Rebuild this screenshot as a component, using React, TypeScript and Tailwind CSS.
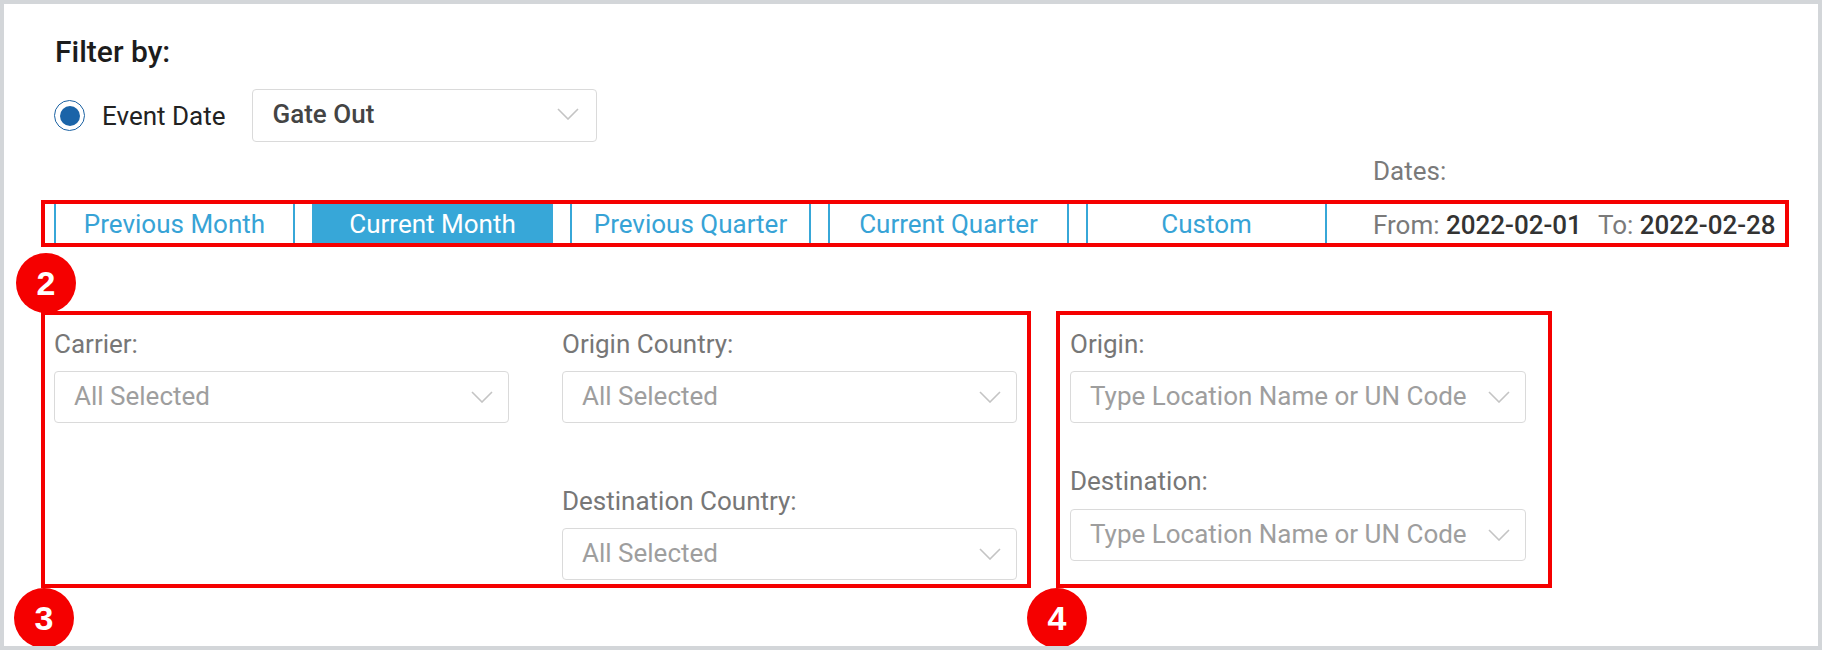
import React from "react";

function Chevron() {
  return (
    <svg width="22" height="12" viewBox="0 0 22 12" fill="none" className="text-[#c4c4c4] shrink-0">
      <polyline points="1,1 11,11 21,1" stroke="currentColor" strokeWidth="1.6" />
    </svg>
  );
}

function SelectBox({ text, width }: { text: string; width: string }) {
  return (
    <div className={`${width} h-[52px] border border-[#dadada] rounded-[4px] bg-white flex items-center justify-between pl-[19px] pr-[15px]`}>
      <span className="text-[#9e9e9e] whitespace-nowrap mb-[3px]">{text}</span>
      <Chevron />
    </div>
  );
}

function Field({ label, text, className = "" }: { label: string; text: string; className?: string }) {
  return (
    <div className={`flex flex-col ${className}`}>
      <div className="h-[30px] text-[#777777]">{label}</div>
      <div className="mt-[12px]">
        <SelectBox text={text} width="w-[455px]" />
      </div>
    </div>
  );
}

function Badge({ n, pos }: { n: string; pos: string }) {
  return (
    <div
      className={`absolute ${pos} w-[60px] h-[60px] rounded-full bg-[#f50000] flex items-center justify-center text-white font-bold text-[34px] font-['Liberation_Sans',sans-serif]`}
    >
      {n}
    </div>
  );
}

const tabs = ["Previous Month", "Current Month", "Previous Quarter", "Current Quarter", "Custom"];

export default function App() {
  return (
    <div className="w-[1822px] h-[650px] bg-white border-4 border-[#d3d6d9] relative overflow-hidden font-['Roboto',sans-serif] text-[26px] leading-[30px]">
      <div className="flex flex-col pt-[33px]">
        <div className="pl-[51px] h-[30px] font-medium text-[30px] text-[#1c1c1c]">Filter by:</div>

        <div className="pl-[50px] mt-[22px] h-[53px] flex items-center">
          <div className="w-[31px] h-[31px] rounded-full border-[1.5px] border-[#1b62a3] flex items-center justify-center">
            <div className="w-[20px] h-[20px] rounded-full bg-[#1a64a8]" />
          </div>
          <span className="ml-[17px] text-[#222222]">Event Date</span>
          <div className="ml-[27px] w-[345px] h-[53px] border border-[#dadada] rounded-[4px] flex items-center justify-between pl-[19px] pr-[17px] pb-[4px]">
            <span className="font-medium text-[#444444]">Gate Out</span>
            <Chevron />
          </div>
        </div>

        <div className="mt-[14px] pl-[1369px] h-[30px] text-[#7a7a7a]">Dates:</div>

        <div className="mt-[14px] ml-[37px] w-[1748px] h-[47px] border-4 border-[#f50000] flex items-stretch pl-[9px]">
          <div className="flex gap-[17px]">
            {tabs.map((t, i) => (
              <div
                key={t}
                className={
                  i === 1
                    ? "w-[241px] flex items-center justify-center bg-[#37a7d8] text-white"
                    : "w-[241px] flex items-center justify-center border-x-2 border-[#37a7d8] text-[#37a3d6]"
                }
              >
                {t}
              </div>
            ))}
          </div>
          <div className="ml-[46px] flex items-center whitespace-nowrap pt-[2px]">
            <span className="text-[#7a7a7a]">From:&nbsp;</span>
            <span className="font-medium text-[#333333]">2022-02-01</span>
            <span className="text-[#7a7a7a] ml-[16px]">To:&nbsp;</span>
            <span className="font-medium text-[#333333]">2022-02-28</span>
          </div>
        </div>

        <div className="mt-[64px] ml-[37px] flex items-stretch gap-[25px]">
          <div className="w-[990px] border-4 border-[#f50000] pl-[9px] pr-[10px] pt-[14px] pb-[4px] grid grid-cols-[455px_455px] gap-x-[53px]">
            <Field label="Carrier:" text="All Selected" />
            <div className="flex flex-col">
              <Field label="Origin Country:" text="All Selected" />
              <Field label="Destination Country:" text="All Selected" className="mt-[63px]" />
            </div>
          </div>
          <div className="w-[496px] border-4 border-[#f50000] pl-[10px] pt-[14px] flex flex-col">
            <div className="flex flex-col">
              <div className="h-[30px] text-[#777777]">Origin:</div>
              <div className="mt-[12px]">
                <SelectBox text="Type Location Name or UN Code" width="w-[456px]" />
              </div>
            </div>
            <div className="flex flex-col mt-[43px]">
              <div className="h-[30px] text-[#777777]">Destination:</div>
              <div className="mt-[13px]">
                <SelectBox text="Type Location Name or UN Code" width="w-[456px]" />
              </div>
            </div>
          </div>
        </div>
      </div>

      <Badge n="2" pos="left-[12px] top-[249px]" />
      <Badge n="3" pos="left-[10px] top-[584px]" />
      <Badge n="4" pos="left-[1023px] top-[584px]" />
    </div>
  );
}
